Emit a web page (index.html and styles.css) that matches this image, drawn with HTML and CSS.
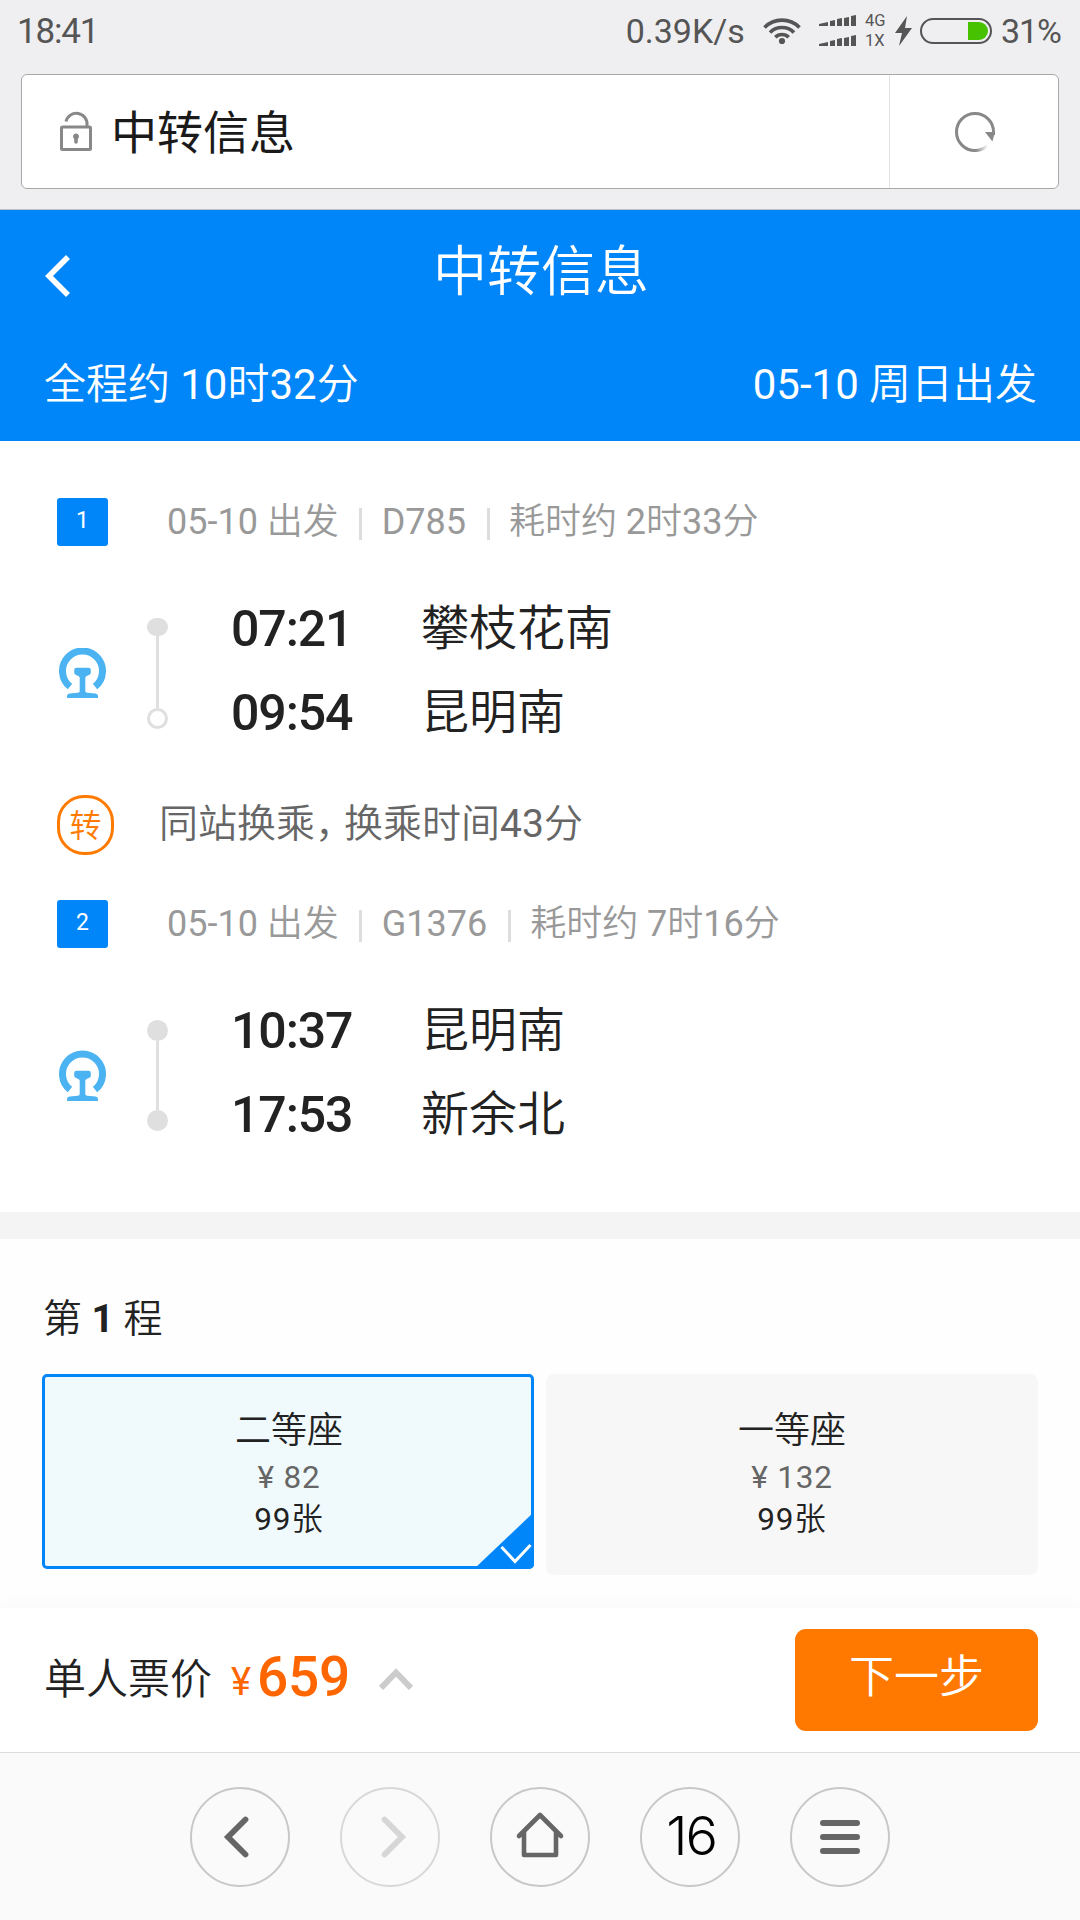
FILE: index.html
```html
<!DOCTYPE html>
<html lang="zh-CN">
<head>
    <meta charset="UTF-8">
    <meta name="viewport" content="width=device-width, initial-scale=1.0">
    <title>中转信息</title>
    <link rel="stylesheet" href="styles.css">
</head>
<body>
    <div class="container">
        <!-- 状态栏 -->
        <div class="status-bar">
            <span class="clock">18:41</span>
            <div class="status-right">
                <span class="speed">0.39K/s</span>
                <svg class="wifi" width="38" height="28" viewBox="0 0 38 28">
                    <g fill="none" stroke="#555" stroke-width="3.6">
                        <path d="M1.5 10.5a24.5 24.5 0 0 1 35 0"/>
                        <path d="M7 15.5a17 17 0 0 1 24 0"/>
                        <path d="M12.3 20.2a9.6 9.6 0 0 1 13.4 0"/>
                    </g>
                    <circle cx="19" cy="24" r="3.1" fill="#555"/>
                </svg>
                <div class="signals">
                    <svg width="38" height="12" viewBox="0 0 38 12" fill="#555"><path d="M0 9l9-2v4H0zM11 6l5-1v6h-5zM18 4l5-1v8h-5zM25 3l5-1v9h-5zM32 1l5-1v11h-5z"/></svg>
                    <svg width="38" height="12" viewBox="0 0 38 12" fill="#555"><path d="M0 9l9-2v4H0zM11 6l5-1v6h-5zM18 4l5-1v8h-5zM25 3l5-1v9h-5zM32 1l5-1v11h-5z"/></svg>
                </div>
                <div class="net"><span>4G</span><span>1X</span></div>
                <svg class="bolt" width="17" height="30" viewBox="0 0 17 30" fill="#555"><path d="M12 0L0 17h7L4 30l13-18h-7z"/></svg>
                <div class="battery"><div class="battery-level"></div></div>
                <span class="percent">31%</span>
            </div>
        </div>

        <!-- 地址栏 -->
        <div class="address">
            <div class="address-box">
                <svg class="lock" width="32" height="41" viewBox="0 0 32 41">
                    <rect x="1.5" y="17" width="29" height="22.5" rx="1" fill="none" stroke="#888" stroke-width="3"/>
                    <path d="M6 11.5a10.7 10.7 0 0 1 21 4V16" fill="none" stroke="#888" stroke-width="3"/>
                    <path d="M16 23.5a3 3 0 0 1 1.8 5.4v3a1.8 1.8 0 0 1-3.6 0v-3a3 3 0 0 1 1.8-5.4z" fill="#888"/>
                </svg>
                <span class="address-txt">中转信息</span>
                <div class="reload">
                    <svg width="42" height="42" viewBox="0 0 42 42">
                        <defs>
                            <linearGradient id="fade" gradientUnits="userSpaceOnUse" x1="22" y1="0" x2="34" y2="0">
                                <stop offset="0" stop-color="#888"/>
                                <stop offset="1" stop-color="#888" stop-opacity="0"/>
                            </linearGradient>
                        </defs>
                        <path d="M21 39.5A18.5 18.5 0 1 1 39.5 21v3" fill="none" stroke="#888" stroke-width="3"/>
                        <path d="M21 39.5a18.5 18.5 0 0 0 12.5-4.9" fill="none" stroke="url(#fade)" stroke-width="3"/>
                        <path d="M31 21h10l-2.6 9.6z" fill="#888"/>
                    </svg>
                </div>
            </div>
        </div>

        <header class="header">
            <div class="title-row">
                <svg class="back" width="26" height="44" viewBox="0 0 26 44"><path d="M23 3L4 22l19 19" fill="none" stroke="#fff" stroke-width="5.6"/></svg>
                <h1>中转信息</h1>
            </div>
            <div class="summary">
                <p>全程约 <em>10</em>时<em>32</em>分</p>
                <p><em>05-10</em> 周日出发</p>
            </div>
        </header>

        <!-- 行程 -->
        <section class="trip">
            <div class="leg">
                <div class="leg-head">
                    <span class="num">1</span>
                    <p><em>05-10</em> 出发</p><i></i><p><em>D785</em></p><i></i><p>耗时约 <em>2</em>时<em>33</em>分</p>
                </div>
                <div class="leg-body">
                    <svg class="train" width="47" height="51" viewBox="0 0 47 51">
                        <path d="M11 38.6a20 20 0 1 1 25 0" fill="none" stroke="#4bb3f1" stroke-width="7"/>
                        <path d="M17.5 19.8h12q2.3 0 2.3 2.3v2.7q0 1.8-2 2.3l-2.5 1.2q-1 .5-1 2V43q0 1.5 2 1.7l8 .8q2.7.3 2.7 2.5v2H8v-2q0-2.2 2.7-2.5l8-.8q2-.2 2-1.7V30.3q0-1.5-1-2l-2.5-1.2q-2-.5-2-2.3v-2.7q0-2.3 2.3-2.3z" fill="#4bb3f1"/>
                    </svg>
                    <div class="line">
                        <b class="dot flat"></b><b class="bar"></b><b class="dot ring"></b>
                    </div>
                    <div class="stops">
                        <div class="stop"><strong>07:21</strong><span>攀枝花南</span></div>
                        <div class="stop"><strong>09:54</strong><span>昆明南</span></div>
                    </div>
                </div>
            </div>

            <div class="transfer">
                <span class="transfer-icon">转</span>
                <p>同站换乘<span class="comma">，</span>换乘时间<em>43</em>分</p>
            </div>

            <div class="leg">
                <div class="leg-head">
                    <span class="num">2</span>
                    <p><em>05-10</em> 出发</p><i></i><p><em>G1376</em></p><i></i><p>耗时约 <em>7</em>时<em>16</em>分</p>
                </div>
                <div class="leg-body">
                    <svg class="train" width="47" height="51" viewBox="0 0 47 51">
                        <path d="M11 39.6a20 20 0 1 1 25 0" fill="none" stroke="#4bb3f1" stroke-width="7"/>
                        <path d="M17.5 20.8h12q2.3 0 2.3 2.3v2.7q0 1.8-2 2.3l-2.5 1.2q-1 .5-1 2V44q0 1.5 2 1.7l8 .8q2.7.3 2.7 2.5v2H8v-2q0-2.2 2.7-2.5l8-.8q2-.2 2-1.7V31.3q0-1.5-1-2l-2.5-1.2q-2-.5-2-2.3v-2.7q0-2.3 2.3-2.3z" fill="#4bb3f1"/>
                    </svg>
                    <div class="line">
                        <b class="dot"></b><b class="bar"></b><b class="dot"></b>
                    </div>
                    <div class="stops">
                        <div class="stop"><strong>10:37</strong><span>昆明南</span></div>
                        <div class="stop"><strong>17:53</strong><span>新余北</span></div>
                    </div>
                </div>
            </div>
        </section>

        <!-- 座位 -->
        <section class="seats">
            <h2>第 <b>1</b> 程</h2>
            <div class="seat-list">
                <div class="seat active">
                    <h3>二等座</h3>
                    <p class="seat-price">¥ 82</p>
                    <p class="seat-left"><em>99</em>张</p>
                    <svg class="check" width="60" height="57" viewBox="0 0 60 57">
                        <path d="M60 0v57H0z" fill="#0086f9"/>
                        <path d="M27.5 35l13.5 14.5 15.5-16.5" fill="none" stroke="#fff" stroke-width="3"/>
                    </svg>
                </div>
                <div class="seat">
                    <h3>一等座</h3>
                    <p class="seat-price">¥ 132</p>
                    <p class="seat-left"><em>99</em>张</p>
                </div>
            </div>
        </section>

        <div class="pay-bar">
            <span class="pay-label">单人票价</span>
            <span class="pay-unit">¥</span>
            <span class="pay-price">659</span>
            <svg class="arrow" width="34" height="22" viewBox="0 0 34 22"><path d="M2 20L17 4.5 32 20" fill="none" stroke="#ccc" stroke-width="6"/></svg>
            <button class="next">下一步</button>
        </div>

        <!-- 浏览器工具栏 -->
        <nav class="toolbar">
            <a class="tool"><svg width="100" height="100" viewBox="0 0 100 100"><path d="M55.5 32.5L38 50l17.5 17.5" fill="none" stroke="#666" stroke-width="5.8" stroke-linecap="round"/></svg></a>
            <a class="tool off"><svg width="100" height="100" viewBox="0 0 100 100"><path d="M44.5 32.5L62 50 44.5 67.5" fill="none" stroke="#d6d6d6" stroke-width="5.8" stroke-linecap="round"/></svg></a>
            <a class="tool"><svg width="100" height="100" viewBox="0 0 100 100"><path d="M29 49l21-21 21 21M34 45v23h32V45" fill="none" stroke="#666" stroke-width="4.6" stroke-linecap="round" stroke-linejoin="round"/></svg></a>
            <a class="tool count">16</a>
            <a class="tool"><svg width="100" height="100" viewBox="0 0 100 100"><path d="M33 36h34M33 50h34M33 64h34" fill="none" stroke="#666" stroke-width="6" stroke-linecap="round"/></svg></a>
        </nav>
    </div>
</body>
</html>
```
FILE: styles.css
```css
*{margin:0; padding:0; box-sizing: border-box;}
body{font-family: Roboto, "Noto Sans CJK SC", sans-serif; font-weight: 350; color: #222; background-color: #fefefe;}
svg{display: block; flex-shrink: 0;}
em{font-style: normal; font-weight: 400;}
.container{width: 1080px; height: 1920px; display: flex; flex-direction: column; overflow: hidden;}

.status-bar{height: 74px; padding: 0 19px 12px 17px; background-color: #efeff1; display: flex; justify-content: space-between; align-items: center; font-size: 34px; font-weight: 400; color: #555;}
.clock{letter-spacing: -1.2px; font-size: 35px;}
.status-right{display: flex; align-items: center; white-space: nowrap;}
.wifi{margin-left: 18px;}
.signals{display: flex; flex-direction: column; gap: 8px; margin-left: 18px;}
.net{width: 28px; margin-left: 8px; display: flex; flex-direction: column; font-size: 16.5px; line-height: 20px;}
.bolt{margin-left: 2px;}
.battery{width: 72px; height: 26px; margin: 0 9px 0 8px; padding: 2px; border: 2px solid #555; border-radius: 13px; display: flex; justify-content: flex-end;}
.battery-level{width: 20px; height: 18px; background-color: #47c200; border-radius: 0 9px 9px 0;}
.percent{letter-spacing: -1px;}

.address{height: 136px; padding: 0 21px; background-color: #efeff1; border-bottom: 1px solid #c0c0c0;}
.address-box{height: 115px; padding-left: 38px; background-color: #fff; border: 1px solid #a8a8a8; border-radius: 6px; display: flex; align-items: center;}
.lock{margin-top: -2px;}
.address-txt{margin: 3px 0 0 19px; font-size: 46px; line-height: 60px; font-weight: 400; color: #1a1a1a;}
.reload{width: 169px; height: 113px; padding-left: 2px; margin-left: auto; border-left: 1px solid #e2e2e2; display: flex; justify-content: center; align-items: center;}

.header{height: 231px; background-color: #0086f9; color: #fff;}
.title-row{height: 124px; padding-left: 45px; display: flex; align-items: center;}
.back{margin-top: 8px;}
.title-row h1{flex: 1; padding: 2px 69px 0 0; font-size: 54px; line-height: 120px; font-weight: 350; text-align: center;}
.summary{padding: 21px 43px 0 44px; display: flex; justify-content: space-between; font-size: 42px; line-height: 60px;}

.trip{height: 771px; padding: 57px 57px 0; background-color: #fff;}
.leg-head{height: 48px; display: flex; align-items: center; font-size: 36px; line-height: 48px; color: #999; white-space: nowrap;}
.num{width: 51px; height: 48px; margin-right: 59px; background-color: #0086f9; border-radius: 3px; color: #fff; font-size: 23px; line-height: 46px; font-weight: 400; text-align: center;}
.leg-head i{width: 3px; height: 32px; margin: 4px 19.5px 0 20.5px; background-color: #ddd;}
.leg-body{height: 168px; margin-top: 41px; display: flex;}
.train{margin: 61px 41px 0 2px;}
.line{width: 21px; height: 111px; margin: 31px 63px 0 0; display: flex; flex-direction: column; align-items: center;}
.dot{width: 21px; height: 21px; background-color: #dfdfdf; border-radius: 50%;}
.dot.flat{height: 18px; border-radius: 9px;}
.dot.ring{background-color: #fff; border: 3px solid #dfdfdf;}
.bar{width: 3px; flex: 1; background-color: #dfdfdf;}
.stop{height: 84px; display: flex; align-items: center; font-size: 48px; line-height: 84px;}
.stop strong{width: 190px; font-size: 50px; font-weight: 500; letter-spacing: -1.1px;}
.transfer{height: 60px; margin: 40px 0 45px; display: flex; align-items: center; font-size: 39px; color: #666;}
.transfer-icon{width: 57px; height: 60px; margin-right: 45px; border: 3px solid #ff7a00; border-radius: 27px; color: #ff7a00; font-size: 32px; line-height: 56px; text-align: center;}
.transfer p{line-height: 56px; padding-bottom: 2px;}
.comma{letter-spacing: -10px;}

.seats{height: 396px; padding: 0 42px; border-top: 27px solid #f4f4f4;}
.seats h2{padding: 50px 0 0 1px; font-size: 39px; line-height: 60px; font-weight: 350;}
.seats h2 b{font-weight: 700;}
.seat-list{margin-top: 25px; display: flex; align-items: flex-start; gap: 12px;}
.seat{width: 492px; height: 201px; padding-top: 34px; background-color: #f7f7f7; border-radius: 8px; text-align: center; position: relative;}
.seat.active{height: 195px; padding: 31px 0 0 2px; background-color: #f0fafd; border: 3px solid #0086f9; border-radius: 5px;}
.seat h3{font-size: 36px; line-height: 46px; font-weight: 350;}
.seat p{font-size: 31.5px; line-height: 42px; letter-spacing: 0.8px;}
.seat .seat-price{margin-top: 3px; color: #666; font-weight: 400;}
.check{position: absolute; right: -3px; bottom: -3px; border-bottom-right-radius: 5px;}

.pay-bar{height: 144px; padding: 0 42px 0 44px; background-color: #fff; box-shadow: 0 0 18px rgba(0,0,0,0.04); display: flex; align-items: center; line-height: 60px; white-space: nowrap; z-index: 1;}
.pay-label{font-size: 42px;}
.pay-unit{margin: 4px 0 0 19px; font-size: 38px; font-weight: 400; color: #ff6600;}
.pay-price{margin: -6px 0 0 6px; font-size: 55px; font-weight: 500; letter-spacing: -0.3px; color: #ff6600;}
.arrow{margin: -2px 0 0 29px;}
.next{width: 243px; height: 102px; margin-left: auto; padding-bottom: 4px; border: none; border-radius: 11px; background-color: #ff7800; color: #fff; font-family: inherit; font-size: 45px; line-height: 96px; font-weight: 350;}

.toolbar{flex: 1; padding-top: 34px; background-color: #fafafa; border-top: 1px solid #ddd; display: flex; justify-content: center; gap: 50px; z-index: 2;}
.tool{width: 100px; height: 100px; border: 2px solid #c8c8c8; border-radius: 50%; display: flex; justify-content: center; align-items: center;}
.tool.off{border-color: #d8d8d8;}
.tool.count{padding: 0 0 4px 2px; font-family: Inter, sans-serif; font-size: 54px; font-weight: 300; color: #000; letter-spacing: -2px;}
```
